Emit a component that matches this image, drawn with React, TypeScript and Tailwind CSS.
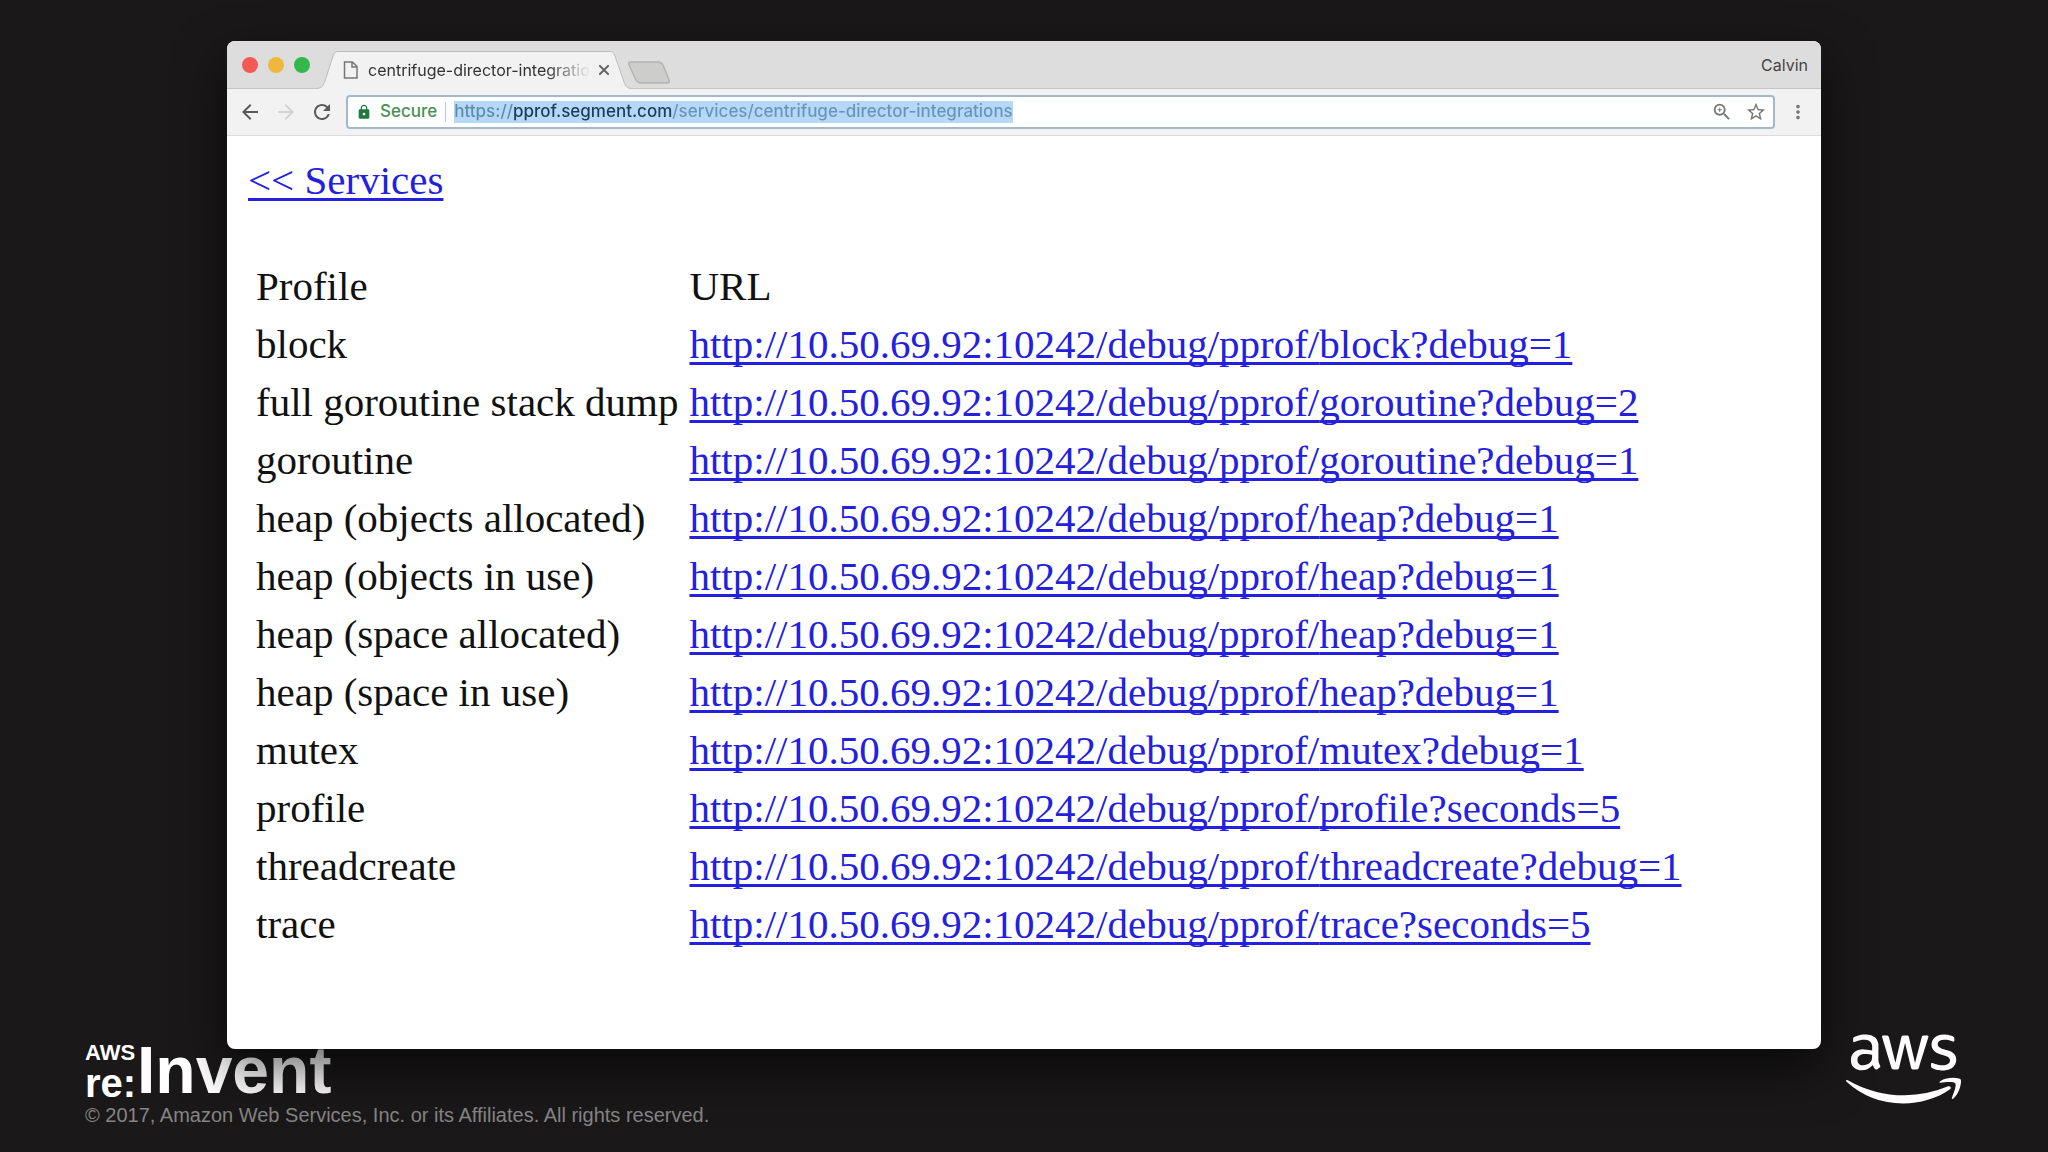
import { FaAws } from 'react-icons/fa';
import { MdArrowBack, MdArrowForward, MdLock, MdMoreVert, MdRefresh, MdStarBorder, MdZoomIn } from 'react-icons/md';

interface Profile {
  name: string;
  path: string;
}

const HOST = 'http://10.50.69.92:10242/debug/pprof/';

const PROFILES: Profile[] = [
  { name: 'block', path: 'block?debug=1' },
  { name: 'full goroutine stack dump', path: 'goroutine?debug=2' },
  { name: 'goroutine', path: 'goroutine?debug=1' },
  { name: 'heap (objects allocated)', path: 'heap?debug=1' },
  { name: 'heap (objects in use)', path: 'heap?debug=1' },
  { name: 'heap (space allocated)', path: 'heap?debug=1' },
  { name: 'heap (space in use)', path: 'heap?debug=1' },
  { name: 'mutex', path: 'mutex?debug=1' },
  { name: 'profile', path: 'profile?seconds=5' },
  { name: 'threadcreate', path: 'threadcreate?debug=1' },
  { name: 'trace', path: 'trace?seconds=5' },
];

const linkClass =
  'text-[#2320de] underline decoration-[3px] underline-offset-4 [text-decoration-skip-ink:none]';

function TabStrip() {
  return (
    <div className="flex h-12 items-end bg-[#dedddd] border-b border-[#c4c4c4]">
      {/* Traffic lights */}
      <div className="flex gap-[10px] pl-[15px] self-center">
        <button aria-label="Close" className="size-4 rounded-full bg-[#f25a56]" />
        <button aria-label="Minimize" className="size-4 rounded-full bg-[#f0b73f]" />
        <button aria-label="Zoom" className="size-4 rounded-full bg-[#35b84b]" />
      </div>

      {/* Active tab */}
      <div className="relative -mb-px ml-[7px] flex h-[38px] w-[314px] items-center pl-[25px] pr-[22px]">
        <svg className="absolute inset-0 size-full" viewBox="0 0 314 38" preserveAspectRatio="none" aria-hidden="true">
          <path
            d="M0 37.5C5 37 6 35 8 30L16 5C17 2 18 .5 21 .5H293C296 .5 297 2 298 5L307 31C309 36 310 37 314 37.5V38H0Z"
            fill="#f3f2f2"
          />
          <path
            d="M0 37.5C5 37 6 35 8 30L16 5C17 2 18 .5 21 .5H293C296 .5 297 2 298 5L307 31C309 36 310 37 314 37.5"
            fill="none"
            stroke="#bcbcbc"
          />
        </svg>
        <svg className="relative size-[18px] shrink-0" viewBox="0 0 18 18" fill="none" stroke="#777" strokeWidth="1.5" aria-hidden="true">
          <path d="M2.5 1h8l4.500 4.500v11.500h-12.500zM10 1v5h5" />
        </svg>
        <span className="relative ml-2 flex-1 overflow-hidden whitespace-nowrap text-base text-[#333] [mask-image:linear-gradient(to_right,black_80%,transparent)]">
          centrifuge-director-integrations
        </span>
        <button aria-label="Close tab" className="relative ml-2">
          <svg className="size-[10px]" viewBox="0 0 10 10" stroke="#666" strokeWidth="2">
            <path d="M0 0l10 10M10 0L0 10" />
          </svg>
        </button>
      </div>
      <button aria-label="New tab" className="mb-1">
        <svg className="-ml-1 h-[23px] w-[44px]" viewBox="0 0 44 23" fill="#cdcdcb" stroke="#b3b3b3" strokeWidth="1.500">
          <path d="M4 1H31C34 1 35 2 36 4L42 19C43 21 42 22 40 22H14C11 22 10 21 9 19L2 4C1 2 2 1 4 1Z" />
        </svg>
      </button>
      <span className="ml-auto self-center pr-[13px] text-base text-[#444]">Calvin</span>
    </div>
  );
}

function Toolbar() {
  return (
    <div className="flex h-[47px] items-center border-b border-[#dcdcdc] bg-[#f3f2f2] pb-px pl-[11px] pr-3">
      <button aria-label="Back" className="text-[#5a5a5a]">
        <MdArrowBack size={24} />
      </button>
      <button aria-label="Forward" className="ml-3 text-[#d4d4d4]">
        <MdArrowForward size={24} />
      </button>
      <button aria-label="Reload" className="ml-3 text-[#5a5a5a]">
        <MdRefresh size={24} />
      </button>

      {/* Address bar */}
      <div className="ml-3 flex h-[34px] flex-1 items-center rounded-sm border-2 border-[#a3b9c9] bg-white pl-2 pr-1.5">
        <MdLock size={16} className="text-[#1f7a3c]" />
        <span className="ml-2 text-[17px] font-medium text-[#4b8f55]">Secure</span>
        <span className="mx-2 h-5 w-px bg-[#ccc]" />
        <input
          aria-label="Address"
          readOnly
          value="https://pprof.segment.com/services/centrifuge-director-integrations"
          className="h-[22px] field-sizing-content text-[17px] font-medium text-transparent [background:linear-gradient(to_right,#5d8da5_60px,#1d3c57_60px_218px,#6b93b8_218px)_text,linear-gradient(#b5d7f8,#b5d7f8)_padding-box]"
        />
        <button aria-label="Page zoom" className="ml-auto text-[#777]">
          <MdZoomIn size={22} />
        </button>
        <button aria-label="Bookmark this page" className="ml-3 text-[#777]">
          <MdStarBorder size={22} />
        </button>
      </div>
      <button aria-label="Menu" className="ml-3 text-[#777]">
        <MdMoreVert size={22} />
      </button>
    </div>
  );
}

function ProfileTable() {
  return (
    <table className="mt-[54px] border-separate border-spacing-x-[5px] border-spacing-y-0 text-left">
      <thead>
        <tr className="h-[58px]">
          <th className="px-[3px] font-normal">Profile</th>
          <th className="px-[3px] font-normal">URL</th>
        </tr>
      </thead>
      <tbody>
        {PROFILES.map((profile) => (
          <tr key={profile.name} className="h-[58px]">
            <td className="whitespace-nowrap px-[3px]">{profile.name}</td>
            <td className="whitespace-nowrap px-[3px]">
              <a href="#" className={linkClass}>
                {HOST}
                {profile.path}
              </a>
            </td>
          </tr>
        ))}
      </tbody>
    </table>
  );
}

function SlideFooter() {
  return (
    <footer className="-mt-4 flex items-start justify-between pl-[85px] pr-[87px] font-['Liberation_Sans',Arial,sans-serif]">
      <div>
        <div className="flex h-[70px] items-end font-bold text-white">
          <div className="w-[52px]">
            <div className="text-[22px] leading-5">AWS</div>
            <div className="text-[40px] leading-10">re:</div>
          </div>
          <div className="text-[66px] leading-[66px]">Invent</div>
        </div>
        <p className="text-xl leading-6 text-[#858585]">
          © 2017, Amazon Web Services, Inc. or its Affiliates. All rights reserved.
        </p>
      </div>
      <FaAws className="-mt-[10px] h-[92px] w-[115px] text-white" role="img" aria-label="aws" />
    </footer>
  );
}

export default function App() {
  return (
    <div className="min-h-screen overflow-hidden bg-[#1a1819] pt-[41px]">
      <main className="relative z-10 mx-[227px] overflow-hidden rounded-lg bg-white shadow-[0_20px_50px_rgba(0,0,0,0.6)]">
        <div className="font-[Inter,sans-serif]">
          <TabStrip />
          <Toolbar />
        </div>
        <div className="px-[21px] pb-24 pt-[21px] font-['Liberation_Serif','Times_New_Roman',serif] text-[41px] leading-[46px] text-[#111]">
          <a href="#" className={linkClass}>
            &lt;&lt; Services
          </a>
          <ProfileTable />
        </div>
      </main>
      <SlideFooter />
    </div>
  );
}
